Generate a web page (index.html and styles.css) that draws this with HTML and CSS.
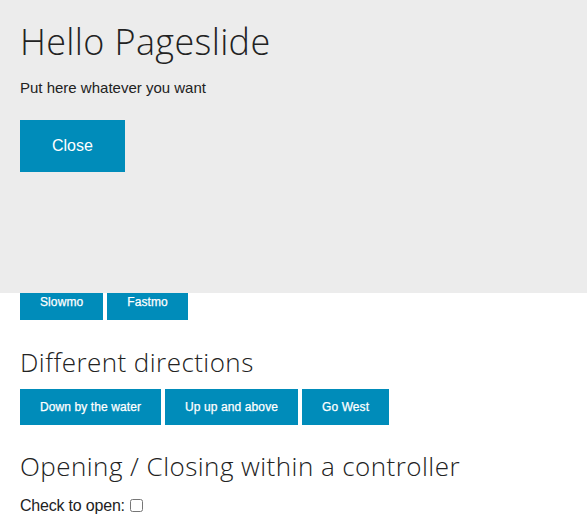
FILE: index.html
```html
<!DOCTYPE html>
<html>
<head>
<meta charset="utf-8">
<link rel="stylesheet" href="styles.css">
</head>
<body>
<main class="page">
  <div class="btn-row">
    <button class="btn">Slowmo</button>
    <button class="btn">Fastmo</button>
  </div>
  <h2 class="heading">Different directions</h2>
  <div class="btn-row">
    <button class="btn">Down by the water</button>
    <button class="btn">Up up and above</button>
    <button class="btn">Go West</button>
  </div>
  <h2 class="heading heading-second">Opening / Closing within a controller</h2>
  <p class="check-line">Check to open: <input type="checkbox" class="check"></p>
</main>
<aside class="pageslide">
  <h1 class="slide-title">Hello Pageslide</h1>
  <p class="slide-text">Put here whatever you want</p>
  <button class="btn btn-large">Close</button>
</aside>
</body>
</html>
```
FILE: styles.css
```css
html, body {
  margin: 0;
  padding: 0;
  background: #fff;
}
body {
  font-family: "Liberation Sans", Arial, sans-serif;
  color: #222;
  width: 587px;
  height: 522px;
  overflow: hidden;
  position: relative;
}
.page {
  padding: 284px 20px 0;
}
.btn-row {
  display: flex;
  gap: 4px;
}
.btn {
  border: 0;
  margin: 0;
  background: #008cba;
  color: #fff;
  font-family: "Liberation Sans", Arial, sans-serif;
  font-size: 12px;
  font-weight: normal;
  letter-spacing: 0.1px;
  -webkit-text-stroke: 0.25px #fff;
  height: 36px;
  line-height: 36px;
  padding: 0 20px;
  cursor: pointer;
}
.heading {
  font-family: "Open Sans", sans-serif;
  font-weight: 300;
  font-size: 26px;
  letter-spacing: 0.45px;
  line-height: 31px;
  color: #222;
  margin: 27px 0 11px;
}
.heading-second {
  margin-top: 26px;
  margin-bottom: 0;
}
.check-line {
  font-size: 16px;
  letter-spacing: -0.2px;
  line-height: 18px;
  margin: 15px 0 0;
}
.check {
  margin: 0 0 0 1px;
  width: 13px;
  height: 13px;
  vertical-align: -1px;
}
.pageslide {
  position: absolute;
  top: 0;
  left: 0;
  right: 0;
  height: 293px;
  box-sizing: border-box;
  background: #ececec;
  padding: 20px 20px 0;
}
.slide-title {
  font-family: "Open Sans", sans-serif;
  font-weight: 300;
  font-size: 36px;
  letter-spacing: 0.35px;
  line-height: 43px;
  margin: 0;
  color: #222;
}
.slide-text {
  font-size: 15px;
  line-height: 24px;
  margin: 13px 0 20px;
}
.btn-large {
  font-size: 16px;
  letter-spacing: 0;
  -webkit-text-stroke: 0;
  height: 52px;
  line-height: 52px;
  padding: 0 32px;
}
```
